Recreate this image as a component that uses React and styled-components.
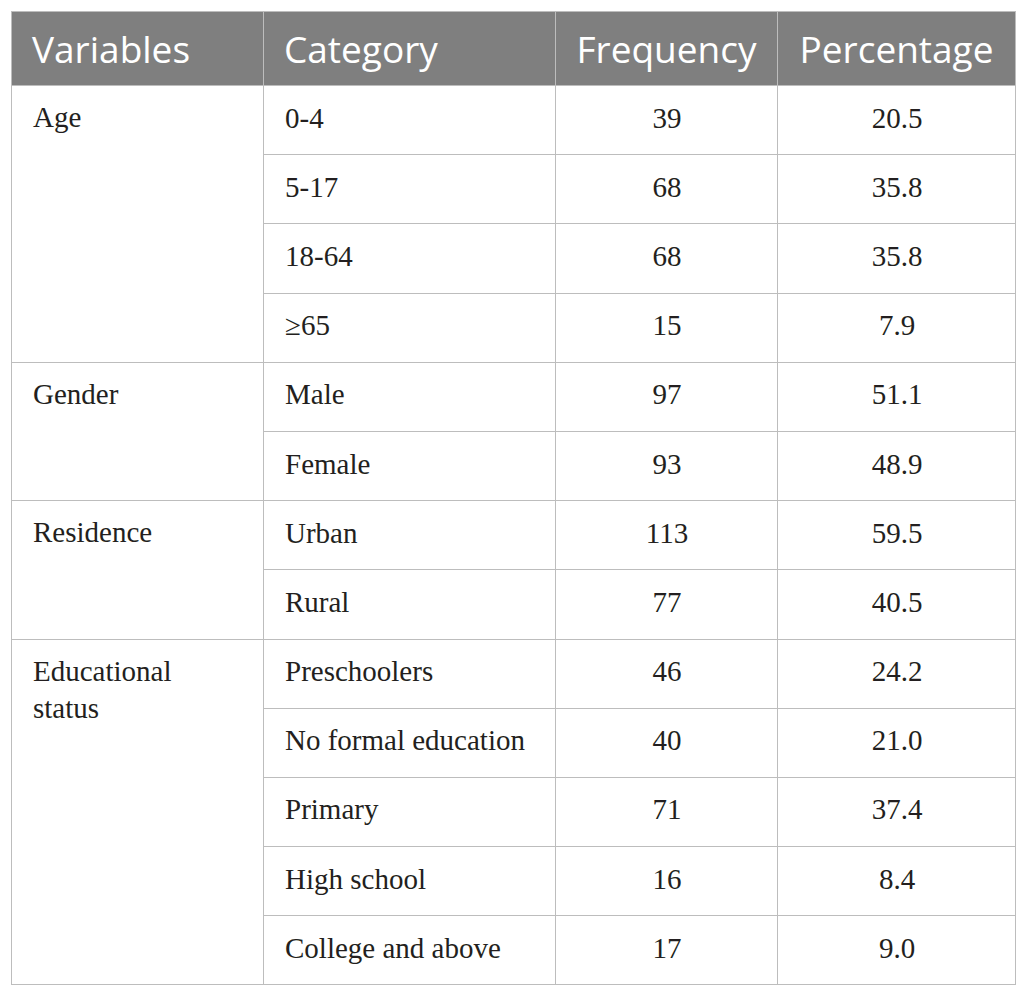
import styled, { createGlobalStyle } from "styled-components";

const GlobalStyle = createGlobalStyle`
  html, body {
    margin: 0;
    padding: 0;
    background: #ffffff;
  }
`;

const Page = styled.div`
  padding: 11px 10px 10px 11px;
`;

const Table = styled.table`
  width: 1004px;
  border-collapse: collapse;
  table-layout: fixed;
  border: 1px solid #bdbdbd;
`;

const HeadCell = styled.th`
  background: #7f7f7f;
  color: #ffffff;
  font-family: "Open Sans", "Noto Sans", sans-serif;
  font-weight: 400;
  font-size: 37px;
  line-height: 40px;
  height: 74px;
  box-sizing: border-box;
  padding: 0 20px;
  text-align: ${(p) => (p.$center ? "center" : "left")};
  border-left: 1px solid #bdbdbd;
  white-space: nowrap;
`;

const Cell = styled.td`
  font-family: "Liberation Serif", "Times New Roman", serif;
  font-size: 29px;
  line-height: 37px;
  color: #231f20;
  height: 69.2px;
  box-sizing: border-box;
  padding: 13px 20px 17px 21px;
  vertical-align: ${(p) => (p.$top ? "top" : "middle")};
  text-align: ${(p) => (p.$center ? "center" : "left")};
  border: 1px solid #bdbdbd;
  white-space: pre-line;
`;

const groups = [
  {
    name: "Age",
    rows: [
      ["0-4", "39", "20.5"],
      ["5-17", "68", "35.8"],
      ["18-64", "68", "35.8"],
      ["\u226565", "15", "7.9"],
    ],
  },
  {
    name: "Gender",
    rows: [
      ["Male", "97", "51.1"],
      ["Female", "93", "48.9"],
    ],
  },
  {
    name: "Residence",
    rows: [
      ["Urban", "113", "59.5"],
      ["Rural", "77", "40.5"],
    ],
  },
  {
    name: "Educational\nstatus",
    rows: [
      ["Preschoolers", "46", "24.2"],
      ["No formal education", "40", "21.0"],
      ["Primary", "71", "37.4"],
      ["High school", "16", "8.4"],
      ["College and above", "17", "9.0"],
    ],
  },
];

export default function App() {
  return (
    <>
      <GlobalStyle />
      <Page>
        <Table>
          <colgroup>
            <col style={{ width: 252 }} />
            <col style={{ width: 292 }} />
            <col style={{ width: 222 }} />
            <col style={{ width: 238 }} />
          </colgroup>
          <thead>
            <tr>
              <HeadCell>Variables</HeadCell>
              <HeadCell>Category</HeadCell>
              <HeadCell $center>Frequency</HeadCell>
              <HeadCell $center>Percentage</HeadCell>
            </tr>
          </thead>
          <tbody>
            {groups.map((g) =>
              g.rows.map((r, i) => (
                <tr key={g.name + r[0]}>
                  {i === 0 && (
                    <Cell $top rowSpan={g.rows.length}>
                      {g.name}
                    </Cell>
                  )}
                  <Cell>{r[0]}</Cell>
                  <Cell $center>{r[1]}</Cell>
                  <Cell $center>{r[2]}</Cell>
                </tr>
              ))
            )}
          </tbody>
        </Table>
      </Page>
    </>
  );
}
